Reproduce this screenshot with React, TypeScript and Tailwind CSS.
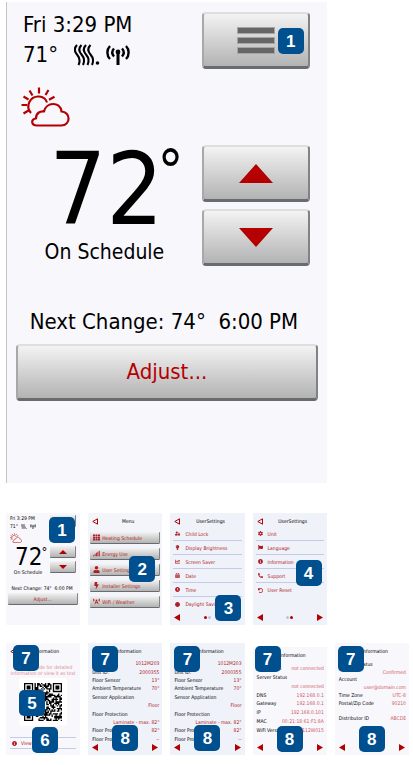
import type { ReactNode } from "react"
import { clsx } from "clsx"
import type { IconType } from "react-icons"
import {
  FaBolt, FaBroadcastTower, FaCalendarAlt, FaChartLine, FaCircle, FaClock, FaCog, FaFlag,
  FaInfoCircle, FaLightbulb, FaPhoneAlt, FaSignal, FaTh, FaUndo, FaUser, FaUserLock,
} from "react-icons/fa"

const bevel =
  "flex items-center bg-linear-to-b from-[#f3f3f3] to-[#b3b3b3] border-t-[#dedede] border-l-[#a8a8a8] border-r-[#808386] border-b-[#686c6f]"
const bigButton = clsx(bevel, "justify-center h-[57px] rounded-[4px] border-2 border-b-[3px]")
const miniButton = clsx(bevel, "h-3 rounded-[1px] border border-t-0 border-l-0 text-[#b01c24]")

function Badge({ n, className }: { n: number; className: string }) {
  return (
    <span
      className={clsx(
        "absolute z-10 flex size-[26px] items-center justify-center rounded-[5px] bg-[#00508f]",
        "font-['Liberation_Sans',sans-serif] text-[17px] leading-none font-bold text-white",
        className
      )}
    >
      {n}
    </span>
  )
}

function Triangle({ dir, className }: { dir: "up" | "down" | "left" | "right"; className: string }) {
  const points = {
    up: "0,20 17,0 34,20",
    down: "0,0 34,0 17,20",
    left: "34,0 34,20 0,10",
    right: "0,0 34,10 0,20",
  }
  return (
    <svg viewBox="0 0 34 20" preserveAspectRatio="none" className={className} aria-hidden="true">
      <polygon points={points[dir]} fill="#b40000" />
    </svg>
  )
}

function HeatIcon({ className }: { className: string }) {
  return (
    <svg viewBox="0 0 26 22" className={className} fill="none" stroke="#000" strokeWidth="2.1" aria-hidden="true">
      {[0, 4.5, 9, 13.5].map((x) => (
        <path key={x} d={`M${x + 3} 1 C${x} 4 ${x} 7 ${x + 3} 10.500 C${x + 6} 14 ${x + 6.5} 17 ${x + 4.5} 21`} />
      ))}
      <circle cx="23.500" cy="19" r="1.800" fill="#000" stroke="none" />
    </svg>
  )
}

function AntennaIcon({ className }: { className: string }) {
  return (
    <svg viewBox="0 0 24 20" className={className} fill="none" stroke="#000" strokeWidth="2.4" aria-hidden="true">
      <path d="M4 1 C0.500 4.500 0.500 10.500 4 14 M20 1 C23.500 4.500 23.500 10.500 20 14" />
      <path d="M8 3.500 C5.800 6 5.800 9 8 11.500 M16 3.500 C18.200 6 18.200 9 16 11.500" />
      <circle cx="12" cy="7" r="2.400" fill="#000" stroke="none" />
      <path d="M12 8 V20" strokeWidth="3" />
    </svg>
  )
}

function WeatherIcon({ className }: { className: string }) {
  return (
    <svg
      viewBox="0 0 49 40"
      className={className}
      fill="none"
      stroke="#b40000"
      strokeWidth="2.2"
      strokeLinejoin="round"
      aria-hidden="true"
    >
      <path d="M10 26 C4 19 9 9 18 9.500 C22 9.700 25 12 26 15.500" />
      <path d="M18 0.500 V6.500 M8.500 3.500 L11.500 8.500 M27.500 3 L24.500 8 M2.500 9.500 L7.500 12.500 M33.500 9.800 L28 12.800 M0.500 18 H6 M2.500 26.500 L7.500 23.500" />
      <path d="M16 38.500 C10 38.500 9.500 32 15 31.500 C15 26 19 24 23 24.500 C25 15 39 14 40.500 24.500 C49.500 25 50.500 38 40 38.500 Z" />
    </svg>
  )
}

function MenuBars() {
  return (
    <span className="flex w-[38px] flex-col gap-[3px]">
      <span className="h-[7px] border border-[#a5a5a5] bg-[#666]" />
      <span className="h-[7px] border border-[#a5a5a5] bg-[#666]" />
      <span className="h-[7px] border border-[#a5a5a5] bg-[#666]" />
    </span>
  )
}

function Thermostat() {
  return (
    <section className="relative col-span-4 border-l border-[#c4c4c4] bg-[#f8f7fc] pt-2 pb-[82px] text-[22px] leading-[30px]">
      <div className="flex justify-between pr-[17px]">
        <div className="pl-4">
          <p>Fri 3:29 PM</p>
          <div className="flex items-center">
            <span className="w-[51px]">71°</span>
            <HeatIcon className="h-[22px] w-[26px]" />
            <AntennaIcon className="ml-1.5 h-5 w-6" />
          </div>
          <WeatherIcon className="mt-[17px] -ml-0.5 h-10 w-[49px]" />
        </div>
        <button aria-label="Menu" className={clsx(bigButton, "mt-0.5 w-[108px]")}>
          <MenuBars />
        </button>
      </div>
      <Badge n={1} className="top-[26px] right-[23px]" />
      <div className="mt-[18px] flex pr-[17px]">
        <div className="flex-1 text-center">
          <p className="flex items-start justify-center pl-6 text-[100px] leading-[90px]">
            72<span className="-ml-1.5 text-[58px] leading-[52px]">°</span>
          </p>
          <p className="mt-0.5 text-[21px]">On Schedule</p>
        </div>
        <div className="flex w-[108px] flex-col gap-[7px]">
          <button aria-label="Warmer" className={bigButton}>
            <Triangle dir="up" className="h-[19px] w-[34px]" />
          </button>
          <button aria-label="Cooler" className={bigButton}>
            <Triangle dir="down" className="h-[19px] w-[34px]" />
          </button>
        </div>
      </div>
      <p className="mt-10 pr-1.5 text-center whitespace-pre">Next Change: 74°  6:00 PM</p>
      <div className="mt-[7px] px-[9px]">
        <button className={clsx(bigButton, "w-full text-[#b40000]")}>Adjust...</button>
      </div>
    </section>
  )
}

function Screen({ children, className }: { children: ReactNode; className?: string }) {
  return (
    <section className={clsx("relative flex flex-col text-[5px] leading-[6px]", className)}>{children}</section>
  )
}

function ScreenTitle({ children, back }: { children: ReactNode; back?: boolean }) {
  return (
    <header className="relative pt-[5px] text-center">
      {back && (
        <button aria-label="Back" className="absolute top-[5px] left-1">
          <svg viewBox="0 0 6 7" className="h-[7px] w-1.5" fill="none" stroke="#b40000" aria-hidden="true">
            <path d="M5.500 0.800 V6.200 L0.800 3.500 Z" />
          </svg>
        </button>
      )}
      <h2 className="pl-1.5">{children}</h2>
    </header>
  )
}

function Pager({ page }: { page?: 1 | 2 }) {
  return (
    <footer className="mt-auto flex items-center justify-between px-1 pb-1">
      <button aria-label="Previous">
        <Triangle dir="left" className="h-[7px] w-1.5" />
      </button>
      {page && (
        <span className="flex gap-px">
          <span className={clsx("size-[3px] rounded-full", page === 1 ? "bg-[#b40000]" : "bg-[#b9c4e2]")} />
          <span className={clsx("size-[3px] rounded-full", page === 2 ? "bg-[#b40000]" : "bg-[#b9c4e2]")} />
        </span>
      )}
      <button aria-label="Next">
        <Triangle dir="right" className="h-[7px] w-1.5" />
      </button>
    </footer>
  )
}

function HomeScreen() {
  return (
    <Screen className="h-28 bg-[#f8f7fc]">
      <div className="flex justify-between pt-0.5 pr-1">
        <div className="pl-1">
          <p>Fri 3:29 PM</p>
          <div className="mt-0.5 flex items-center gap-[3px]">
            71°
            <HeatIcon className="h-[5px] w-1.5" />
            <AntennaIcon className="h-[5px] w-1.5" />
          </div>
          <WeatherIcon className="mt-1 h-[10px] w-3" />
        </div>
        <button aria-label="Menu" className={clsx(miniButton, "w-[26px]")} />
      </div>
      <div className="mt-[3px] flex pr-1">
        <div className="flex-1 text-center">
          <p className="flex justify-center pl-1.5 text-[24px] leading-[22px]">
            72<span className="-ml-px text-[13px] leading-[12px]">°</span>
          </p>
          <p className="mt-px">On Schedule</p>
        </div>
        <div className="flex w-[26px] flex-col gap-[3px]">
          <button aria-label="Warmer" className={clsx(miniButton, "justify-center")}>
            <Triangle dir="up" className="h-1 w-2" />
          </button>
          <button aria-label="Cooler" className={clsx(miniButton, "justify-center")}>
            <Triangle dir="down" className="h-1 w-2" />
          </button>
        </div>
      </div>
      <p className="mt-2.5 pr-0.5 text-center whitespace-pre">Next Change: 74°  6:00 PM</p>
      <div className="mt-0.5 px-0.5">
        <button className={clsx(miniButton, "w-full justify-center")}>Adjust...</button>
      </div>
      <Badge n={1} className="top-1 left-[43px]" />
    </Screen>
  )
}

type Item = { label: string; icon: IconType }

const menuItems: Item[] = [
  { label: "Heating Schedule", icon: FaTh },
  { label: "Energy Use", icon: FaSignal },
  { label: "User Settings", icon: FaUser },
  { label: "Installer Settings", icon: FaBolt },
  { label: "WiFi / Weather", icon: FaBroadcastTower },
]

const settingsOne: Item[] = [
  { label: "Child Lock", icon: FaUserLock },
  { label: "Display Brightness", icon: FaLightbulb },
  { label: "Screen Saver", icon: FaChartLine },
  { label: "Date", icon: FaCalendarAlt },
  { label: "Time", icon: FaClock },
  { label: "Daylight Saving", icon: FaCircle },
]

const settingsTwo: Item[] = [
  { label: "Unit", icon: FaCog },
  { label: "Language", icon: FaFlag },
  { label: "Information", icon: FaInfoCircle },
  { label: "Support", icon: FaPhoneAlt },
  { label: "User Reset", icon: FaUndo },
]

function MenuScreen() {
  return (
    <Screen className="h-28 bg-[#f4f5fa]">
      <ScreenTitle back>Menu</ScreenTitle>
      <nav className="mt-2 flex flex-col gap-1 px-0.5">
        {menuItems.map(({ label, icon: Icon }) => (
          <button key={label} className={clsx(miniButton, "gap-0.5 pl-[3px]")}>
            <Icon className="size-[7px]" />
            {label}
          </button>
        ))}
      </nav>
      <Badge n={2} className="top-[43px] left-[41px]" />
    </Screen>
  )
}

function SettingsScreen({ items, page, children }: { items: Item[]; page: 1 | 2; children: ReactNode }) {
  return (
    <Screen className="h-28 bg-[#eff2f9]">
      <ScreenTitle back>UserSettings</ScreenTitle>
      <nav className="mt-[3px] flex flex-col px-[3px]">
        {items.map(({ label, icon: Icon }, i) => (
          <button
            key={label}
            className={clsx(
              "flex h-3.5 items-center gap-[5px] pl-0.5 whitespace-nowrap text-[#b01c24]",
              i < items.length - 1 && "border-b border-[#c3cbe6]"
            )}
          >
            <Icon className="size-[5px]" />
            {label}
          </button>
        ))}
      </nav>
      <Pager page={page} />
      {children}
    </Screen>
  )
}

// Made-up code with the three corner finders of a real one
const QR = 29
function qrModule(x: number, y: number) {
  for (const [fx, fy] of [[0, 0], [QR - 7, 0], [0, QR - 7]]) {
    const dx = x - fx
    const dy = y - fy
    if (dx >= -1 && dx <= 7 && dy >= -1 && dy <= 7) {
      const ring = Math.max(Math.abs(dx - 3), Math.abs(dy - 3))
      return ring === 3 || ring <= 1
    }
  }
  return ((x * 73 + y * 151 + x * y * 37 + ((x * x * y) % 13) * 7) % 11) < 6
}

function QrCode() {
  let d = ""
  for (let y = 0; y < QR; y++) {
    for (let x = 0; x < QR; x++) {
      if (qrModule(x, y)) d += `M${x} ${y}h1v1h-1z`
    }
  }
  return (
    <svg viewBox={`0 0 ${QR} ${QR}`} className="size-[38px]" role="img" aria-label="QR code">
      <path d={d} fill="#000" />
    </svg>
  )
}

function QrScreen() {
  return (
    <Screen className="h-28 bg-[#f8f7fc]">
      <ScreenTitle back>Information</ScreenTitle>
      <p className="mt-2.5 text-center whitespace-nowrap text-[#e08c92]">
        Scan QR code for detailed
        <br />
        information or view it as text
      </p>
      <div className="mx-auto mt-0.5 rounded-[3px] bg-white p-[5px]">
        <QrCode />
      </div>
      <button className="mx-1 mt-auto mb-1.5 flex h-3 items-center gap-1 border-y border-[#c3cbe6] pl-0.5 text-[#b01c24]">
        <FaInfoCircle className="size-[5px]" />
        View as Text
      </button>
      <Badge n={7} className="top-0.5 left-[7px]" />
      <Badge n={5} className="top-[47px] left-[13px]" />
      <Badge n={6} className="top-[84px] left-[26px]" />
    </Screen>
  )
}

type Row = { label?: string; value?: string }

const deviceRows: Row[] = [
  { label: "SW Version", value: "1012M203" },
  { label: "Unit ID:", value: "2000355" },
  { label: "Floor Sensor", value: "13°" },
  { label: "Ambient Temperature", value: "70°" },
  { label: "Sensor Application" },
  { value: "Floor" },
  { label: "Floor Protection" },
  { value: "Laminate - max. 82°" },
  { label: "Floor Protection", value: "82°" },
  { label: "Floor Protection", value: "--" },
]

const networkRows: Row[] = [
  { label: "WiFi Status", value: "not connected" },
  { label: "Server Status" },
  { value: "not connected" },
  { label: "DNS", value: "192.168.0.1" },
  { label: "Gateway", value: "192.168.0.1" },
  { label: "IP", value: "192.168.0.101" },
  { label: "MAC", value: "00:21:18:61:F1:8A" },
  { label: "WiFi Version", value: "112W015" },
]

const accountRows: Row[] = [
  { label: "Account Status" },
  { value: "Confirmed" },
  { label: "Account" },
  { value: "user@domain.com" },
  { label: "Time Zone", value: "UTC-8" },
  { label: "Postal/Zip Code", value: "90210" },
  {},
  { label: "Distributor ID", value: "ABCDE" },
]

type InfoProps = { rows: Row[]; className: string; listClass: string; valueClass: string; children: ReactNode }

function InfoScreen({ rows, className, listClass, valueClass, children }: InfoProps) {
  return (
    <Screen className={className}>
      <ScreenTitle>Information</ScreenTitle>
      <dl className={clsx("flex flex-col pr-[3px] pl-1 whitespace-nowrap", listClass)}>
        {rows.map((row, i) => (
          <div key={i} className="flex flex-1 items-center justify-between">
            <dt>{row.label}</dt>
            <dd className={valueClass}>{row.value}</dd>
          </div>
        ))}
      </dl>
      <Pager />
      {children}
    </Screen>
  )
}

export default function App() {
  return (
    <main className="min-h-screen bg-white pt-0.5 pr-1 pb-2.5 pl-1.5 font-['DejaVu_Sans_Condensed','DejaVu_Sans',sans-serif] text-black">
      <div className="grid grid-cols-5 gap-x-2">
        <Thermostat />
      </div>
      <div className="mt-[30px] grid grid-cols-5 gap-x-2">
        <HomeScreen />
        <MenuScreen />
        <SettingsScreen items={settingsOne} page={1}>
          <Badge n={3} className="top-[82px] left-[45px]" />
        </SettingsScreen>
        <SettingsScreen items={settingsTwo} page={2}>
          <Badge n={4} className="top-[47px] left-[43px]" />
        </SettingsScreen>
      </div>
      <div className="mt-[18px] grid grid-cols-5 items-end gap-x-2">
        <QrScreen />
        <InfoScreen rows={deviceRows} className="h-28 bg-[#eff2f9]" listClass="mt-[5px] h-[84px]" valueClass="text-[#b01c24]">
          <Badge n={7} className="top-[3px] left-1" />
          <Badge n={8} className="top-[82px] left-6" />
        </InfoScreen>
        <InfoScreen rows={deviceRows} className="h-28 bg-[#eff2f9]" listClass="mt-[5px] h-[84px]" valueClass="text-[#b01c24]">
          <Badge n={7} className="top-[3px] left-1" />
          <Badge n={8} className="top-[82px] left-6" />
        </InfoScreen>
        <InfoScreen rows={networkRows} className="h-[108px] bg-[#f8f7fc]" listClass="mt-1.5 h-[70px]" valueClass="text-[#cf5a60]">
          <Badge n={7} className="-top-px left-0.5" />
          <Badge n={8} className="top-[79px] left-6" />
        </InfoScreen>
        <InfoScreen rows={accountRows} className="h-28 bg-[#f8f7fc]" listClass="mt-1.5 h-[62px]" valueClass="text-[#cf5a60]">
          <Badge n={7} className="top-[3px] left-[3px]" />
          <Badge n={8} className="top-[83px] left-6" />
        </InfoScreen>
      </div>
    </main>
  )
}
